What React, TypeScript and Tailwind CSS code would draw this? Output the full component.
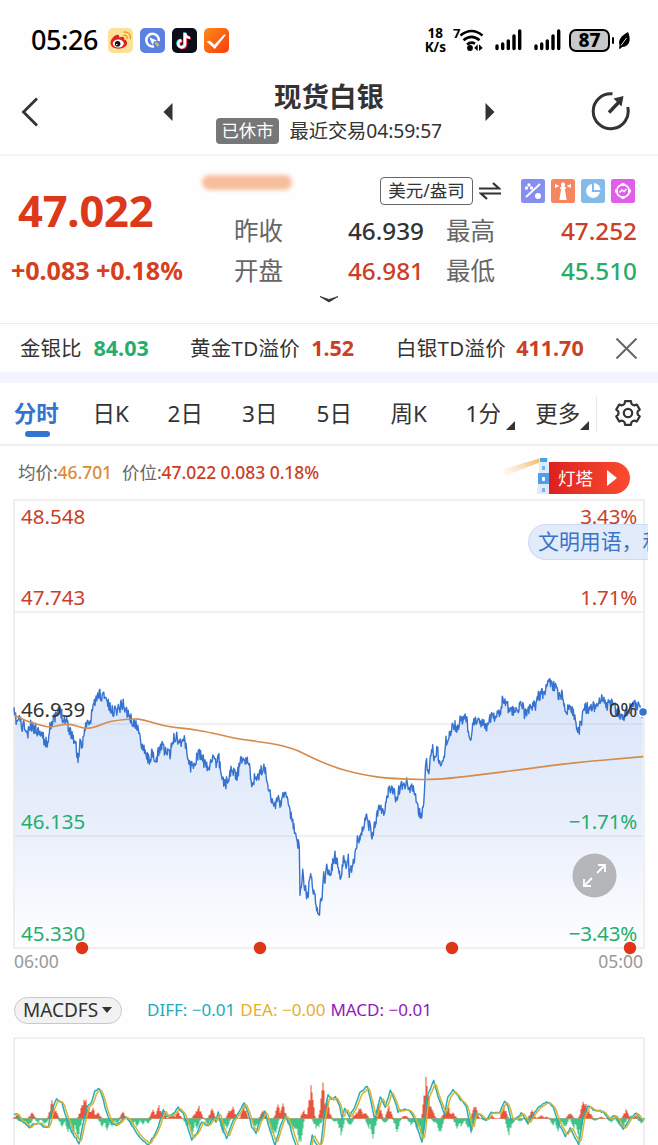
import type { ReactNode } from "react";

type Point = [number, number];

const RED = "#d6401f";
const GREEN = "#26ad6e";

const TABS = ["分时", "日K", "2日", "3日", "5日", "周K", "1分", "更多"];

const AXIS = [
  { y: 524, price: "48.548", pct: "3.43%", color: "#c8402a" },
  { y: 604.5, price: "47.743", pct: "1.71%", color: "#c8402a" },
  { y: 716.5, price: "46.939", pct: "0%", color: "#333333" },
  { y: 828.5, price: "46.135", pct: "−1.71%", color: "#26ad6e" },
  { y: 940.5, price: "45.330", pct: "−3.43%", color: "#26ad6e" },
];

// Series are stored in thirds of a pixel, relative to an origin
function part(ox: number, oy: number, flat: number[]): Point[] {
  const out: Point[] = [];
  for (let i = 0; i < flat.length; i += 2) {
    out.push([ox + flat[i] / 3, oy + flat[i + 1] / 3]);
  }
  return out;
}

const PRICE: Point[] = [
  ...part(0, 660, [
    42, 160, 50, 185, 60, 175, 65, 205, 72, 195, 82, 228, 92, 198, 105, 205, 115, 215, 120, 205, 130, 235, 138, 250,
    145, 240, 150, 190, 160, 185, 172, 160, 180, 150, 190, 175, 200, 180, 210, 215, 218, 225, 228, 260, 234, 298, 240,
    255, 246, 265, 252, 210, 262, 190, 272, 190, 278, 135, 290, 120, 298, 95, 305, 115, 313, 100, 325, 135, 335, 155,
    345, 150, 355, 145, 368, 130, 378, 150, 388, 170, 400, 190, 413, 200, 420, 240, 432, 260, 445, 300, 455, 285, 468,
    310, 478, 265, 488, 250, 495, 275, 510, 285, 520, 235, 530, 230, 540, 245, 553, 235, 562, 285, 572, 320, 585, 310,
    595, 280, 605, 290, 615, 315, 625, 330, 635, 290, 645, 315, 655, 290,
  ]),
  ...part(220, 710, [
    8, 205, 16, 228, 25, 200, 38, 175, 50, 200, 62, 155, 74, 140, 80, 165, 85, 145, 95, 230, 100, 205, 110, 215, 120,
    185, 135, 175, 143, 215, 155, 265, 163, 305, 170, 255, 180, 285, 192, 245, 203, 270, 210, 310, 220, 345, 232, 400,
    238, 410, 240, 540, 244, 530, 248, 470, 252, 520, 263, 565, 272, 480, 280, 545, 290, 590, 297, 625, 303, 560, 308,
    545, 311, 480, 315, 515, 320, 475, 330, 490, 345, 440, 350, 455, 362, 500, 373, 440, 380, 465, 385, 435, 388, 495,
    400, 450, 405, 440, 412, 390, 425, 375, 438, 310, 445, 340, 458, 375, 465, 345, 478, 290, 488, 310, 495, 300, 507,
    230, 520, 245, 530, 265, 540, 235, 560, 220, 570, 240, 580, 235, 592, 285, 602, 325, 611, 280,
  ]),
  ...part(420, 660, [
    18, 305, 25, 335, 38, 270, 42, 300, 52, 265, 58, 310, 70, 310, 78, 245, 90, 225, 100, 190, 112, 205, 122, 180, 137,
    170, 150, 230, 158, 205, 165, 170, 178, 190, 190, 185, 200, 195, 210, 170, 225, 170, 240, 160, 247, 125, 258, 120,
    268, 165, 280, 150, 295, 155, 305, 125, 315, 165, 325, 155, 335, 135, 348, 140, 355, 105, 370, 100, 380, 80, 390,
    65, 398, 85, 405, 75, 413, 105, 425, 105, 435, 150, 450, 140, 463, 165, 473, 225, 483, 190, 493, 145, 510, 145, 520,
    135, 530, 140, 545, 120, 560, 135, 575, 135, 590, 150, 600, 165, 612, 170, 625, 145, 640, 130, 655, 140, 668, 160,
  ]),
];

const AVERAGE: Point[] = [
  ...part(0, 660, [
    42, 165, 60, 175, 90, 187, 120, 195, 150, 203, 180, 195, 210, 192, 235, 200, 260, 206, 290, 200, 320, 187, 350, 181,
    400, 176, 430, 179, 470, 192, 520, 202, 570, 207, 630, 218,
  ]),
  ...part(220, 710, [
    0, 74, 50, 86, 140, 98, 190, 108, 235, 122, 270, 140, 310, 158, 350, 174, 400, 188, 450, 198, 500, 205, 590, 208,
  ]),
  ...part(420, 660, [20, 359, 80, 356, 200, 342, 310, 328, 420, 313, 510, 304, 600, 296, 670, 290]),
];

const DIFF: Point[] = [
  ...part(0, 910, [
    42, 615, 50, 612, 60, 630, 75, 640, 88, 655, 100, 642, 115, 640, 130, 650, 145, 652, 155, 600, 170, 568, 185, 578,
    200, 625, 215, 665, 237, 700, 250, 640, 260, 590, 275, 575, 285, 543, 300, 536, 310, 570, 320, 610, 335, 640, 350,
    645, 375, 620, 395, 645, 410, 670, 425, 690, 445, 705, 460, 680, 475, 650, 490, 598, 500, 620, 515, 615, 535, 593,
    550, 610, 560, 640, 575, 690, 590, 670, 605, 635, 625, 650, 640, 625, 648, 635, 655, 605, 665, 650, 680, 685, 700,
    630, 715, 610, 733, 578, 745, 610, 755, 650, 768, 670, 780, 630, 795, 605, 810, 660, 825, 708, 840, 650, 855, 615,
    870, 650, 885, 700, 900, 740, 915, 745, 930, 715, 937, 675, 945, 695, 955, 712, 963, 700, 972, 620, 984, 552,
  ]),
  ...part(328, 910, [
    4, 558, 10, 570, 22, 558, 35, 590, 43, 625, 50, 595, 65, 620, 80, 590, 95, 550, 118, 528, 130, 580, 140, 630, 157,
    558, 172, 590, 187, 540, 200, 570, 210, 605, 232, 595, 250, 610, 262, 635, 282, 698, 290, 640, 297, 560, 317, 512,
    330, 560, 350, 612, 360, 560, 375, 541, 395, 565, 415, 590, 430, 665, 440, 605, 455, 615, 475, 630, 490, 607, 515,
    608, 530, 572, 540, 590, 550, 630, 565, 625, 580, 610, 600, 640, 620, 605, 640, 585, 660, 576, 675, 590, 690, 635,
    712, 680, 727, 655, 752, 703, 765, 620, 780, 590, 800, 600, 825, 605, 845, 628, 860, 615, 885, 658, 905, 625, 925,
    610, 945, 635,
  ]),
];

// Histogram peaks: x and signed height, in thirds of a pixel
const PEAKS: Point[] = [
  ...part(0, 0, [
    50, -10, 97, -18, 155, -55, 166, -30, 245, -40, 254, -72, 266, -35, 280, -32, 294, -18, 368, -20, 458, -26, 478,
    -40, 490, -22, 515, -15, 533, -20, 587, -22, 596, -38, 637, -30, 690, -30, 700, -35, 731, -42, 790, -24, 833, -42,
    850, -45, 912, -25, 932, -100, 970, -108, 980, -60, 60, 10, 72, 14, 86, 26, 115, 12, 135, 18, 185, 25, 205, 40, 220,
    50, 234, 60, 305, 25, 322, 35, 335, 24, 350, 15, 395, 20, 410, 24, 430, 18, 445, 15, 562, 25, 575, 50, 590, 30, 625,
    18, 670, 45, 680, 30, 765, 30, 775, 20, 815, 44, 826, 55, 873, 30, 885, 40, 900, 90, 948, 30, 957, 26,
  ]),
  ...part(328, 0, [
    0, -30, 85, -18, 97, -38, 110, -20, 153, -45, 183, -38, 232, -10, 295, -125, 303, -65, 313, -28, 350, -20, 360, -40,
    375, -18, 442, -45, 490, -10, 527, -40, 612, -25, 640, -10, 655, -6, 727, -18, 764, -50, 772, -56, 782, -24, 820,
    -5, 893, -28, 920, -10, 20, 12, 38, 50, 65, 24, 124, 30, 134, 60, 172, 15, 208, 40, 250, 20, 268, 34, 282, 60, 320,
    15, 337, 50, 388, 30, 398, 24, 420, 28, 430, 45, 470, 8, 542, 50, 555, 14, 575, 10, 600, 15, 675, 20, 690, 38, 712,
    30, 738, 30, 752, 60, 800, 8, 850, 12, 874, 18, 886, 32, 940, 15,
  ]),
];

const ZERO = 1118.5;

function toPath(points: Point[]) {
  return points.map(([x, y], i) => `${i ? "L" : "M"}${x.toFixed(1)} ${y.toFixed(1)}`).join("");
}

// Deterministic tick noise between the known points
function jitter(points: Point[], step: number, amp: number): Point[] {
  const out: Point[] = [];
  let seed = 11;
  for (let i = 0; i < points.length - 1; i++) {
    const [x0, y0] = points[i];
    const [x1, y1] = points[i + 1];
    const n = Math.max(1, Math.round((x1 - x0) / step));
    for (let k = 0; k < n; k++) {
      seed = (seed * 16807) % 2147483647;
      const r = seed / 2147483647 - 0.5;
      const t = k / n;
      out.push([x0 + (x1 - x0) * t, y0 + (y1 - y0) * t + r * amp]);
    }
  }
  out.push(points[points.length - 1]);
  return out;
}

function smooth(points: Point[]) {
  let d = `M${points[0][0]} ${points[0][1]}`;
  for (let i = 1; i < points.length - 1; i++) {
    const [x, y] = points[i];
    const mx = (x + points[i + 1][0]) / 2;
    const my = (y + points[i + 1][1]) / 2;
    d += `Q${x} ${y} ${mx} ${my}`;
  }
  const last = points[points.length - 1];
  return `${d}L${last[0]} ${last[1]}`;
}

function histogram(sign: number) {
  const heights = new Map<number, number>();
  for (const [x, h] of PEAKS) {
    if (Math.sign(h) !== sign) continue;
    const height = Math.abs(h);
    for (let k = -4; k <= 4; k++) {
      const col = Math.round(x) + k;
      const wobble = (col * 7) % 5 === 0 ? 0.7 : 1;
      const v = height * Math.max(0, 1 - Math.abs(k) / 4.5) * wobble;
      heights.set(col, Math.max(heights.get(col) ?? 0, v));
    }
  }
  return [...heights].map(([x, h]) => `M${x} ${ZERO}v${(h * sign).toFixed(1)}`).join("");
}

const pricePath = toPath(jitter(PRICE, 0.55, 12));
const diff = jitter(DIFF, 1.5, 1.8);
const dea: Point[] = diff.map(([x, y], i) => {
  const prev = diff[Math.max(0, i - 1)];
  return [Math.min(x + 1.2, 643), (y + prev[1]) / 2 + (ZERO - y) * 0.05];
});

const GEAR =
  Array.from({ length: 6 }, (_, i) => {
    const at = (deg: number, r: number) => {
      const a = ((i * 60 + deg - 90) * Math.PI) / 180;
      return `${(14 + Math.cos(a) * r).toFixed(2)} ${(14 + Math.sin(a) * r).toFixed(2)}`;
    };
    return `${i ? "L" : "M"}${at(-14, 12.2)}L${at(14, 12.2)}L${at(20, 10)}Q${at(30, 9)} ${at(40, 10)}`;
  }).join("") + "Z";

function Signal() {
  return (
    <svg width="27" height="22" viewBox="0 0 27 22" stroke="#000" strokeWidth="3.4" strokeLinecap="round">
      <path d="M2 19.500v-2.500M7.700 19.500v-4.500M13.300 19.500v-7.500M19 19.500V7M24.700 19.500V2" />
    </svg>
  );
}

function StatusBar() {
  return (
    <div className="flex h-[76px] items-center pt-1 pr-7 pl-[31px] text-black">
      <div className="w-[77px] text-[27px] leading-8 font-medium tracking-[-0.4px]">05:26</div>
      <div className="flex gap-[7px]">
        <svg width="25" height="25" viewBox="0 0 25 25">
          <rect width="25" height="25" rx="5" fill="#fbe29a" />
          <path d="M2.500 15c0-4 5-9 8-8 1 .4 1 1.500.6 2.500 3-1.400 6-1 5 2 2 .6 3 1.700 3 3.300 0 3.500-4 5.900-8.600 5.900S2.500 18.500 2.500 15Z" fill="#e2231a" />
          <ellipse cx="10.300" cy="15.500" rx="5.500" ry="4" fill="#fff" />
          <circle cx="9.600" cy="15.800" r="2.800" fill="#111" />
          <circle cx="8.800" cy="16.500" r="0.800" fill="#fff" />
          <path d="M16 7.300c2-.3 3.500 1.300 3.200 3.200M16 4c4-.5 7 2.500 6.300 6.700" fill="none" stroke="#f39b20" strokeWidth="1.400" strokeLinecap="round" />
        </svg>
        <svg width="25" height="25" viewBox="0 0 25 25">
          <rect width="25" height="25" rx="5" fill="#5b80df" />
          <path d="M14 18.200a6.300 6.300 0 1 1 4.800-5.200" fill="none" stroke="#fff" strokeWidth="2.500" />
          <path d="m9.500 9.500 7.500 3-3 1-1.500 3.500Z" fill="#fff" />
          <path d="m15.500 14.500 3 3.500" stroke="#d9b96c" strokeWidth="2.500" />
        </svg>
        <svg width="25" height="25" viewBox="0 0 25 25" fill="none" strokeWidth="2.500">
          <rect width="25" height="25" rx="5" fill="#0d0d17" />
          <path d="M13 5v11a3.400 3.400 0 1 1-3.400-3.400M13 5c.4 3 2.400 4.600 5 4.800" stroke="#25f4ee" transform="translate(-.7 -.6)" />
          <path d="M13 5v11a3.400 3.400 0 1 1-3.400-3.400M13 5c.4 3 2.400 4.600 5 4.800" stroke="#fe2c55" transform="translate(.9 .7)" />
          <path d="M13 5v11a3.400 3.400 0 1 1-3.400-3.400M13 5c.4 3 2.400 4.600 5 4.800" stroke="#fff" />
        </svg>
        <svg width="25" height="25" viewBox="0 0 25 25">
          <defs>
            <linearGradient id="check" x1="0" y1="0" x2="1" y2="1">
              <stop offset="0" stopColor="#ff8b1a" />
              <stop offset="1" stopColor="#f83c08" />
            </linearGradient>
          </defs>
          <rect width="25" height="25" rx="5" fill="url(#check)" />
          <path d="m2.500 13.500 3.500-.7 4.500 4L20 6.500l2 .2L10.800 21Z" fill="#fff" />
        </svg>
      </div>
      <div className="ml-auto flex items-center">
        <div className="mr-[7px] text-center text-[13.500px] leading-[14px] font-bold">
          <div>18</div>
          <div>K/s</div>
        </div>
        <div className="-mt-[14px] w-[8px] text-[13px] leading-[14px] font-bold">7</div>
        <svg className="-ml-px" width="24" height="26" viewBox="7 0 24 26" fill="none" stroke="#000" strokeWidth="2.600">
          <path d="M7.500 8.500Q18.500-.5 29.500 8.500M10.500 13.300Q18.500 6.500 26.500 13.300M14 17.600Q18 14.200 22 16.600" />
          <circle cx="17" cy="21" r="2.900" fill="#000" stroke="none" />
          <path d="m24.700 17.200-3.500 3.700 3.500 3.200ZM26 17.200l3.700 3.700-3.700 3.200Z" fill="#000" stroke="none" />
        </svg>
        <div className="ml-[11px] flex gap-3">
          <Signal />
          <Signal />
        </div>
        <div className="ml-[8px] flex h-[23px] w-[41px] items-center justify-center rounded-[7px] border-2 border-black bg-[#c9c9c9] text-[19px] leading-[19px] font-extrabold">
          87
        </div>
        <div className="ml-[2px] h-[7px] w-[2px] rounded bg-black" />
        <svg className="ml-1 -mr-px" width="13" height="19" viewBox="0 0 13 19">
          <path d="M10 1C3 5 0 9 1.500 14.500L1 18l2-.7 1-1.300C10.500 16 14 10 10 1Z" />
          <path d="M3 14.500 8.500 7" stroke="#fff" strokeWidth="0.900" fill="none" />
        </svg>
      </div>
    </div>
  );
}

function Header() {
  return (
    <div className="flex h-[80px] items-start border-b-2 border-[#f5f5f5] text-[#333333]">
      <svg className="mt-[21px] ml-[21px]" width="18" height="30" viewBox="0 0 18 30" fill="none" stroke="#333" strokeWidth="2.800">
        <path d="M16 1.500 2.500 15 16 28.500" />
      </svg>
      <svg className="mt-[27px] ml-[124px]" width="10" height="18" viewBox="0 0 10 18">
        <path d="M9.500 0v18L.5 9Z" fill="#333" />
      </svg>
      <div className="ml-[43px] w-[226px]">
        <div className="text-center text-[27.500px] leading-[41px] font-bold">现货白银</div>
        <div className="mt-px flex items-center justify-between">
          <span className="flex h-[26px] w-[63px] items-center justify-center rounded bg-[#777777] text-[17.300px] text-white">
            已休市
          </span>
          <span className="text-[19.300px] leading-[26px] tracking-[-0.1px] whitespace-nowrap">最近交易04:59:57</span>
        </div>
      </div>
      <svg className="mt-[27px] ml-[43px]" width="10" height="18" viewBox="0 0 10 18">
        <path d="M.5 0v18l9-9Z" fill="#333" />
      </svg>
      <svg className="mt-[15px] ml-[95px]" width="40" height="40" viewBox="0 0 40 40" fill="none" stroke="#333" strokeWidth="3">
        <path d="M22.500 2.800A17.500 17.500 0 1 0 37.700 16" />
        <path d="M19 21.500 29 11" strokeWidth="3.400" />
        <path d="M23.500 7.500 33.500 5 31.500 15.500Z" fill="#333" stroke="none" />
      </svg>
    </div>
  );
}

function QuoteIcon({ color, children }: { color: string; children: ReactNode }) {
  return (
    <svg width="24" height="24" viewBox="0 0 24 24" fill="#fff">
      <rect width="24" height="24" rx="2.500" fill={color} />
      {children}
    </svg>
  );
}

function Quote() {
  return (
    <div className="relative flex h-[168px] border-b border-[#ececec]">
      <div className="w-[195px] shrink-0" style={{ color: RED }}>
        <div className="mt-[30px] pl-[18px] text-[43.500px] leading-[48px] font-bold tracking-[-0.2px] text-[#dc381a]">47.022</div>
        <div className="mt-[20px] pl-[11px] text-[25.200px] leading-8 font-bold tracking-[-0.1px] whitespace-nowrap">+0.083 +0.18%</div>
      </div>
      <div className="w-[442px] pt-[18px]">
        <div className="flex h-[34px] items-center">
          <div className="-mt-[17px] ml-[7px] h-[15px] w-[90px] rounded-full bg-[#f7be9d] blur-[2px]" />
          <div className="ml-auto flex h-[28px] w-[93px] items-center justify-center rounded-[4px] border border-[#666666] pb-px text-[17.500px] whitespace-nowrap text-[#333333]">
            美元/盎司
          </div>
          <svg className="ml-[6px]" width="22" height="20" viewBox="0 0 22 20" fill="none" stroke="#333" strokeWidth="2.200">
            <path d="M0 7.500h20L14 2M22 12.500H2L8 18" />
          </svg>
          <div className="ml-[20px] flex gap-[6px] pr-[2px]">
            <QuoteIcon color="#858ff0">
              <path d="m5 18 14-13" stroke="#fff" strokeWidth="1.800" />
              <circle cx="17" cy="17" r="3" />
              <circle cx="8" cy="6" r="1.700" />
              <circle cx="5.500" cy="9" r="1.700" />
              <circle cx="10.500" cy="9" r="1.700" />
            </QuoteIcon>
            <QuoteIcon color="#f78660">
              <path d="M10 6V4.500L12 3l2 1.500V6l-.5 2 2 12h-7l2-12ZM8.500 20h7v1h-7ZM4 5l4.500 2L4 9ZM20 5l-4.500 2L20 9Z" />
              <path d="M9 9h6" stroke="#fff" strokeWidth="1.500" />
            </QuoteIcon>
            <QuoteIcon color="#85bbeb">
              <path d="M11 5a7 7 0 1 0 8 8h-8Z" />
              <path d="M13 4a7 7 0 0 1 6.500 7H13Z" />
            </QuoteIcon>
            <QuoteIcon color="#e15eed">
              <circle cx="12" cy="12" r="6.300" fill="none" stroke="#fff" strokeWidth="1.800" />
              <path d="M12 4v3M12 17v3M4 12h3M17 12h3" stroke="#fff" strokeWidth="3" />
              <path d="m8.500 13.500 2.500-2.500 2 1.500 2.500-2.500" fill="none" stroke="#fff" strokeWidth="1.500" />
            </QuoteIcon>
          </div>
        </div>
        <div className="mt-[3px] grid grid-cols-[39px_90px_100px_22px_86px_105px] text-[24.500px] leading-10 text-[#666666]">
          <span className="col-start-2">昨收</span>
          <span className="text-right text-[24.300px] font-medium text-[#333333]">46.939</span>
          <span className="col-start-5">最高</span>
          <span className="text-right text-[24.300px] font-medium text-[#cb3f25]">47.252</span>
          <span className="col-start-2">开盘</span>
          <span className="text-right text-[24.300px] font-medium text-[#cb3f25]">46.981</span>
          <span className="col-start-5">最低</span>
          <span className="text-right text-[24.300px] font-medium" style={{ color: GREEN }}>
            45.510
          </span>
        </div>
      </div>
      <svg className="absolute top-[139px] left-[320px]" width="18" height="8" viewBox="0 0 18 8">
        <path d="M0 1.500 9 4.500l9-3-9 5.500Z" fill="#333" stroke="#333" strokeWidth="0.800" />
      </svg>
    </div>
  );
}

function PremiumStrip() {
  return (
    <div className="flex h-[59px] items-center border-b-[11px] border-[#f2f5fd] pl-5 text-[20.500px] whitespace-nowrap text-[#333333]">
      <div className="flex w-[170px] items-baseline gap-[12px]">
        <span>金银比</span>
        <b className="text-[21.500px] leading-7" style={{ color: GREEN }}>84.03</b>
      </div>
      <div className="flex w-[206px] items-baseline gap-[11px]">
        <span className="tracking-[0.3px]">黄金TD溢价</span>
        <b className="text-[21.500px] leading-7 text-[#cb3f25]">1.52</b>
      </div>
      <div className="flex w-[220px] items-baseline gap-[10px]">
        <span className="tracking-[0.3px]">白银TD溢价</span>
        <b className="text-[21.500px] leading-7 text-[#cb3f25]">411.70</b>
      </div>
      <svg width="21" height="21" viewBox="0 0 21 21" stroke="#666" strokeWidth="2">
        <path d="m.5.5 20 20M20.500.5l-20 20" />
      </svg>
    </div>
  );
}

function Tabs() {
  return (
    <div className="flex h-[63px] items-center border-b-2 border-[#f0f0f0]">
      <div className="grid w-[596px] grid-cols-8 text-center text-[22.500px] leading-[59px] text-[#333333]">
        {TABS.map((tab, i) => (
          <div key={tab} className={`relative -left-px ${i === 0 ? "font-bold text-[#3573d1]" : ""}`}>
            {tab}
            {i === 0 && <div className="absolute bottom-[6px] left-[26px] h-[6px] w-[25px] rounded-full bg-[#3573d1]" />}
            {i > 5 && (
              <svg className="absolute right-[6px] bottom-[13px]" width="9" height="9" viewBox="0 0 9 9">
                <path d="M9 0v9H0Z" fill="#333" />
              </svg>
            )}
          </div>
        ))}
      </div>
      <div className="h-9 w-px bg-[#e8e8e8]" />
      <svg className="mb-[2px] ml-[17px]" width="28" height="28" viewBox="0 0 28 28" fill="none" stroke="#333" strokeWidth="2.200" strokeLinejoin="round">
        <path d={GEAR} />
        <circle cx="14" cy="14" r="4.200" />
      </svg>
    </div>
  );
}

function Lighthouse() {
  return (
    <div className="mt-[5px] flex items-end">
      <svg className="-mr-[6px]" width="52" height="38" viewBox="0 0 52 38">
        <defs>
          <linearGradient id="beam" x1="1" y1="0" x2="0" y2="0.500">
            <stop offset="0" stopColor="#f1b65a" />
            <stop offset="1" stopColor="#fdf0e3" stopOpacity="0.700" />
          </linearGradient>
        </defs>
        <path d="M38 2 1 13l1 7 36-14Z" fill="url(#beam)" />
        <path d="M36 2h9v5h1v31H34l2-20Z" fill="#dfe9f8" />
        <path d="M37 2h7v4h-7ZM35 17h11v11H35Z" fill="#4c9fea" />
        <path d="M39 10h3v4h-3ZM39 32h3v4h-3Z" fill="#75b3ea" />
        <rect x="39" y="21" width="3" height="4" rx="1" fill="#fff" />
      </svg>
      <div className="flex h-8 w-[81px] items-center rounded-r-full bg-linear-to-r from-[#dc2020] to-[#fb4b2e] pl-[9px] text-[17.500px] text-white">
        灯塔
        <svg className="ml-[14px]" width="10" height="16" viewBox="0 0 10 16">
          <path d="M0 0v16l10-8Z" fill="#fff" />
        </svg>
      </div>
    </div>
  );
}

function PriceChart() {
  return (
    <div className="relative">
      <svg className="block" width="658" height="477" viewBox="0 499 658 477">
        <defs>
          <linearGradient id="area" gradientUnits="userSpaceOnUse" x1="0" y1="680" x2="0" y2="948">
            <stop offset="0" stopColor="#d9e5fa" />
            <stop offset="0.500" stopColor="#e7eefb" />
            <stop offset="1" stopColor="#fefeff" />
          </linearGradient>
        </defs>
        <path d={`${pricePath}V948H14Z`} fill="url(#area)" />
        <path d="M14 612H644M14 724H644M14 836H644" stroke="#99a4b8" strokeOpacity="0.200" strokeWidth="1.500" />
        <rect x="14" y="500" width="630" height="448" fill="none" stroke="#ebebeb" strokeWidth="1.600" />
        <path d={pricePath} fill="none" stroke="#3672cf" strokeWidth="1.400" strokeLinejoin="round" />
        <path d={smooth(AVERAGE)} fill="none" stroke="#d68a4c" strokeWidth="1.600" />
        {AXIS.map((row) => (
          <g key={row.price} fill={row.color} fontSize="20.500">
            <text x="21" y={row.y}>{row.price}</text>
            <text x="637" y={row.y} textAnchor="end" letterSpacing="-0.200">{row.pct}</text>
          </g>
        ))}
        <circle cx="643" cy="712" r="4.500" fill="#3672cf" stroke="#fff" strokeWidth="1.500" />
        {[82, 260, 452, 630].map((x) => (
          <circle key={x} cx={x} cy="948" r="6.200" fill="#df3519" />
        ))}
        <g fill="#999999" fontSize="17.500">
          <text x="14" y="968">06:00</text>
          <text x="643" y="968" textAnchor="end">05:00</text>
        </g>
      </svg>
      <div className="absolute top-[25px] left-[528px] h-[36px] w-[120px] overflow-hidden rounded-l-full border border-r-0 border-[#cddbf4] bg-[#dbe6f9]/80 pl-[9px] text-[20.900px] leading-[33px] whitespace-nowrap text-[#3b73c6]">
        文明用语，和
      </div>
      <svg className="absolute top-[354px] left-[572px]" width="45" height="45" viewBox="0 0 45 45" fill="none" stroke="#fff" strokeWidth="1.800">
        <circle cx="22.500" cy="22.500" r="22" fill="#b5b6ba" stroke="none" />
        <path d="m25 20 8-8M26 12h7v7M20 25l-8 8M19 33h-7v-7" />
      </svg>
    </div>
  );
}

function MacdChart() {
  return (
    <svg className="block" width="658" height="110" viewBox="0 1035 658 110">
      <path d="M14 1145V1038H644V1145" fill="none" stroke="#ebebeb" strokeWidth="1.600" />
      <path d={`M14 ${ZERO}H644`} stroke="#d88d72" strokeWidth="0.800" />
      <path d={histogram(-1)} stroke="#e8553b" strokeWidth="1.050" />
      <path d={histogram(1)} stroke="#3fc487" strokeWidth="1.050" />
      <path d={toPath(diff)} fill="none" stroke="#26aebb" strokeWidth="1.500" strokeLinejoin="round" />
      <path d={toPath(dea)} fill="none" stroke="#d5b432" strokeWidth="1.500" strokeLinejoin="round" />
    </svg>
  );
}

export default function App() {
  return (
    <div className="h-[1145px] w-[658px] overflow-hidden bg-[#fefefe] font-['Noto_Sans','Noto_Sans_CJK_SC',sans-serif]">
      <StatusBar />
      <Header />
      <Quote />
      <PremiumStrip />
      <Tabs />
      <div className="flex h-[53px] items-center justify-between pr-7 pl-[18px] text-[17.500px] whitespace-nowrap text-[#666666]">
        <div className="mb-px tracking-[-0.05px]">
          均价:<span className="font-medium text-[#dc8b3c]">46.701</span>
          <span className="ml-[10px]">价位:</span>
          <span className="font-medium text-[#cb3f25]">47.022 0.083 0.18%</span>
        </div>
        <Lighthouse />
      </div>
      <PriceChart />
      <div className="flex h-[59px] items-start pt-[21px] pl-[14px] text-[17px] whitespace-nowrap">
        <div className="flex h-[27px] w-[108px] shrink-0 items-center rounded-full border border-[#c8c8c8] bg-[#f2f2f2] pb-px pl-2 text-[19px] text-[#333333]">
          MACDFS
          <svg className="ml-1 shrink-0" width="10" height="6" viewBox="0 0 10 6">
            <path d="M0 0h10L5 6Z" fill="#333" />
          </svg>
        </div>
        <div className="ml-[25px] flex gap-[5px] leading-[26px]">
          <span className="text-[#20abba]">DIFF: −0.01</span>
          <span className="text-[#e5b02b]">DEA: −0.00</span>
          <span className="text-[#9218bd]">MACD: −0.01</span>
        </div>
      </div>
      <MacdChart />
    </div>
  );
}
